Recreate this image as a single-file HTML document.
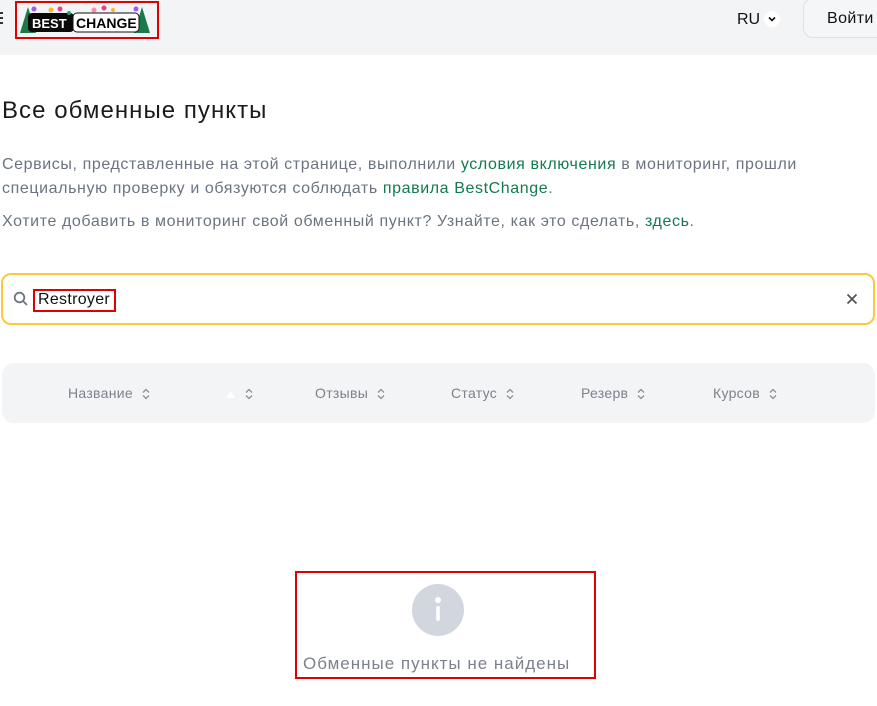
<!DOCTYPE html>
<html><head><meta charset="utf-8">
<style>
*{box-sizing:border-box;margin:0;padding:0}
body{width:877px;height:706px;overflow:hidden;background:#fff;font-family:"Liberation Sans",Arial,sans-serif;position:relative;color:#111}
.hdr{position:absolute;left:0;top:0;width:877px;height:55px;background:#f3f4f6}
.abs{position:absolute}
.gray{color:#6b7480}
a{color:#137a4f;text-decoration:none}
.th{position:absolute;top:385px;font-size:14px;color:#7b828c;letter-spacing:.3px}
.sort{display:inline-block;margin-left:9px;vertical-align:middle}
</style></head><body>
<div class="hdr"></div>
<div class="abs" style="left:0;top:12px;width:3px;height:14px;background:repeating-linear-gradient(#333 0 2px,transparent 2px 5px)"></div>
<div class="abs" style="left:15px;top:1px;width:144px;height:38px;border:2px solid #e00000"></div>
<svg class="abs" style="left:18px;top:5px" width="134" height="30">
<polygon points="10,2 18,28 2,28" fill="#1c7a4a"/>
<polygon points="124,2 132,28 116,28" fill="#1c7a4a"/>
<rect x="10" y="8" width="46" height="19" rx="4" fill="#0a0a0a"/>
<rect x="55" y="8" width="66" height="19" rx="4" fill="#fff" stroke="#111"/>
<text x="14" y="23" font-family="Liberation Sans" font-weight="bold" font-size="13" fill="#fff">BEST</text>
<text x="58" y="23" font-family="Liberation Sans" font-weight="bold" font-size="14" fill="#000">CHANGE</text>
<circle cx="16" cy="4" r="2.5" fill="#9b5de5"/><circle cx="33" cy="5" r="2.5" fill="#f5b82e"/><circle cx="42" cy="4" r="2.5" fill="#e83e8c"/>
<circle cx="51" cy="8" r="2" fill="#2a9d8f"/><circle cx="76" cy="5" r="2.5" fill="#f48fb1"/><circle cx="86" cy="3" r="2.5" fill="#e83e8c"/><circle cx="95" cy="5" r="2" fill="#f5b82e"/><circle cx="118" cy="4" r="2.5" fill="#9b5de5"/>
</svg>
<div class="abs" style="left:737px;top:11px;font-size:16px">RU</div>
<div class="abs" style="left:764px;top:11px;width:16px;height:16px;border-radius:50%;background:#fff"></div>
<svg class="abs" style="left:767px;top:14px" width="10" height="10"><path d="M2 3.5 5 6.5 8 3.5" stroke="#111" stroke-width="1.6" fill="none"/></svg>
<div class="abs" style="left:803px;top:-2px;width:100px;height:40px;border:1px solid #dde0e5;border-radius:10px;background:#f5f6f8"></div>
<div class="abs" style="left:827px;top:10px;font-size:16px;letter-spacing:.4px">Войти</div>

<div class="abs" style="left:2px;top:97px;font-size:24px;letter-spacing:1.05px;color:#1a1a1a">Все обменные пункты</div>
<div class="abs gray" style="left:2px;top:153px;font-size:16px;letter-spacing:.6px;line-height:24px;width:860px">Сервисы, представленные на этой странице, выполнили <a>условия включения</a> в мониторинг, прошли<br>специальную проверку и обязуются соблюдать <a>правила BestChange</a>.</div>
<div class="abs gray" style="left:2px;top:213px;font-size:16px;letter-spacing:.6px">Хотите добавить в мониторинг свой обменный пункт? Узнайте, как это сделать, <a>здесь</a>.</div>

<div class="abs" style="left:1px;top:273px;width:874px;height:52px;border:2px solid #fbc93d;border-radius:10px"></div>
<svg class="abs" style="left:13px;top:291px" width="16" height="16"><circle cx="6.5" cy="6.5" r="4.8" stroke="#6b7480" stroke-width="1.8" fill="none"/><path d="M10 10 14 14" stroke="#6b7480" stroke-width="1.8"/></svg>
<div class="abs" style="left:33px;top:289px;width:83px;height:23px;border:2px solid #e00000"></div>
<div class="abs" style="left:38px;top:291px;font-size:16px;letter-spacing:.3px;color:#111">Restroyer</div>
<svg class="abs" style="left:846px;top:293px" width="12" height="12"><path d="M1.5 1.5 10.5 10.5M10.5 1.5 1.5 10.5" stroke="#555" stroke-width="1.8"/></svg>

<div class="abs" style="left:2px;top:363px;width:873px;height:60px;background:#f3f4f6;border-radius:12px"></div>
<div class="th" style="left:68px">Название<svg class="sort" width="8" height="12"><path d="M1 4.5 4 1.5 7 4.5M1 7.5 4 10.5 7 7.5" stroke="#8a9099" stroke-width="1.3" fill="none"/></svg></div>
<div class="th" style="left:225px"><svg width="11" height="9" style="vertical-align:middle"><path d="M5.5 1 10 8H1Z" fill="#fff"/></svg><svg class="sort" width="8" height="12"><path d="M1 4.5 4 1.5 7 4.5M1 7.5 4 10.5 7 7.5" stroke="#8a9099" stroke-width="1.3" fill="none"/></svg></div>
<div class="th" style="left:315px">Отзывы<svg class="sort" width="8" height="12"><path d="M1 4.5 4 1.5 7 4.5M1 7.5 4 10.5 7 7.5" stroke="#8a9099" stroke-width="1.3" fill="none"/></svg></div>
<div class="th" style="left:451px">Статус<svg class="sort" width="8" height="12"><path d="M1 4.5 4 1.5 7 4.5M1 7.5 4 10.5 7 7.5" stroke="#8a9099" stroke-width="1.3" fill="none"/></svg></div>
<div class="th" style="left:581px">Резерв<svg class="sort" width="8" height="12"><path d="M1 4.5 4 1.5 7 4.5M1 7.5 4 10.5 7 7.5" stroke="#8a9099" stroke-width="1.3" fill="none"/></svg></div>
<div class="th" style="left:713px">Курсов<svg class="sort" width="8" height="12"><path d="M1 4.5 4 1.5 7 4.5M1 7.5 4 10.5 7 7.5" stroke="#8a9099" stroke-width="1.3" fill="none"/></svg></div>

<div class="abs" style="left:295px;top:571px;width:301px;height:108px;border:2px solid #e00000"></div>
<svg class="abs" style="left:412px;top:584px" width="52" height="52"><circle cx="26" cy="26" r="26" fill="#d1d6df"/><circle cx="26" cy="16" r="3" fill="#fff"/><rect x="24.2" y="22" width="3.6" height="15" rx="1.8" fill="#fff"/></svg>
<div class="abs" style="left:303px;top:654px;font-size:17px;letter-spacing:1px;color:#7b828c">Обменные пункты не найдены</div>
</body></html>
